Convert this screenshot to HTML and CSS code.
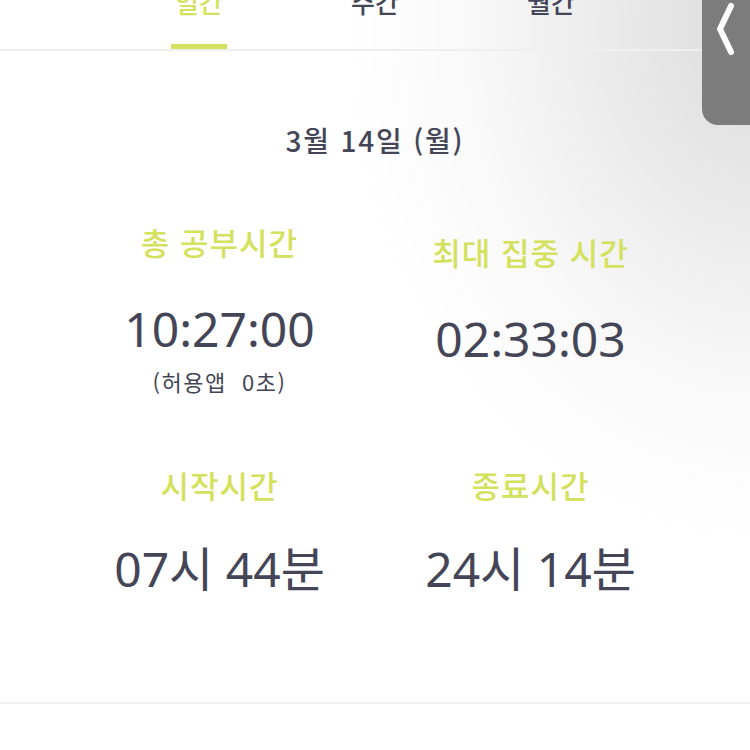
FILE: index.html
```html
<!DOCTYPE html>
<html lang="ko">
<head>
<meta charset="utf-8">
<link rel="stylesheet" href="styles.css">
</head>
<body>
<div class="page">
  <nav class="tabs">
    <div class="tab active"><span class="tab-label">일간</span><span class="tab-bar"></span></div>
    <div class="tab"><span class="tab-label">주간</span><span class="tab-bar"></span></div>
    <div class="tab"><span class="tab-label">월간</span><span class="tab-bar"></span></div>
  </nav>
  <section class="summary">
    <h2 class="date">3월 14일 (월)</h2>
    <div class="stats">
      <div class="stat">
        <div class="stat-label">총 공부시간</div>
        <div class="stat-value">10:27:00</div>
        <div class="stat-sub">(허용앱&nbsp; 0초)</div>
      </div>
      <div class="stat stat-offset">
        <div class="stat-label">최대 집중 시간</div>
        <div class="stat-value">02:33:03</div>
      </div>
      <div class="stat stat-row2">
        <div class="stat-label">시작시간</div>
        <div class="stat-value">07시 44분</div>
      </div>
      <div class="stat stat-row2">
        <div class="stat-label">종료시간</div>
        <div class="stat-value">24시 14분</div>
      </div>
    </div>
  </section>
  <div class="bottom-line"></div>
</div>
<div class="side-handle">
  <svg width="24" height="60" viewBox="0 0 24 60"><path d="M19 6 L8 29 L19 52" fill="none" stroke="#fff" stroke-width="6" stroke-linecap="round" stroke-linejoin="round"/></svg>
</div>
</body>
</html>
```
FILE: styles.css
```css
html, body {
  margin: 0;
  padding: 0;
}
body {
  width: 750px;
  height: 750px;
  overflow: hidden;
  font-family: "Noto Sans CJK KR", "Noto Sans", sans-serif;
  color: #444556;
  background: #fff radial-gradient(ellipse 420px 520px at 760px 30px, rgba(0,0,0,0.14) 0%, rgba(0,0,0,0.075) 40%, rgba(0,0,0,0.025) 70%, rgba(0,0,0,0) 100%);
  position: relative;
}
.page {
  display: flex;
  flex-direction: column;
}
.tabs {
  display: flex;
  justify-content: center;
  margin-top: -16px;
  border-bottom: 2px solid #eeeef3;
}
.tab {
  width: 176px;
  display: flex;
  flex-direction: column;
  align-items: center;
}
.tab-label {
  font-size: 26px;
  font-weight: 500;
  line-height: 36px;
  color: #444556;
}
.tab-bar {
  width: 56px;
  height: 5px;
  margin-top: 24px;
}
.tab.active .tab-label { color: #d3e15c; }
.tab.active .tab-bar { background: #d3e15c; }
.summary {
  display: flex;
  flex-direction: column;
  align-items: center;
  height: 651px;
}
.date {
  margin: 69px 0 0;
  font-size: 28px;
  font-weight: 500;
  line-height: 40px;
  letter-spacing: 1.8px;
}
.stats {
  display: grid;
  grid-template-columns: 311px 311px;
  margin-top: 62px;
}
.stat {
  display: flex;
  flex-direction: column;
  align-items: center;
}
.stat-offset { padding-top: 10px; }
.stat-row2 { margin-top: 69px; }
.stat-label {
  font-size: 31px;
  font-weight: 500;
  line-height: 40px;
  letter-spacing: 1px;
  color: #d3e15c;
}
.stat-value {
  margin-top: 37px;
  font-family: "Noto Sans", "Noto Sans CJK KR", sans-serif;
  font-size: 48px;
  font-weight: 400;
  line-height: 60px;
}
.stat-row2 .stat-value { margin-top: 34px; }
.stat-sub {
  font-size: 22px;
  line-height: 30px;
  letter-spacing: 1.5px;
  margin-top: 7px;
}
.bottom-line {
  height: 2px;
  background: #eeeef3;
}
.side-handle {
  position: absolute;
  top: 0;
  right: 0;
  width: 48px;
  height: 125px;
  background: #7c7c7c;
  border-bottom-left-radius: 16px;
  display: flex;
  justify-content: flex-start;
  align-items: flex-start;
}
.side-handle svg { margin-left: 10px; }
```
